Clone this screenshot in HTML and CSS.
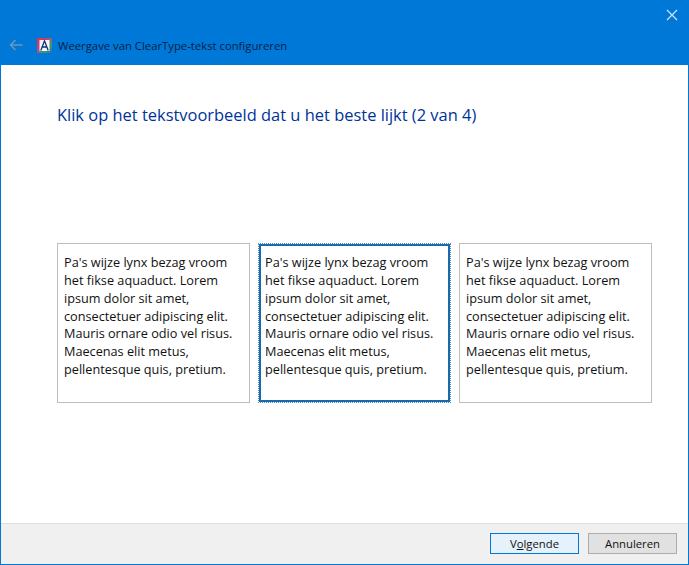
FILE: index.html
```html
<!DOCTYPE html>
<html lang="nl">
<head>
<meta charset="utf-8">
<title>Weergave van ClearType-tekst configureren</title>
<link rel="stylesheet" href="styles.css">
</head>
<body>
<div class="window">
  <header class="titlebar">
    <div class="close-row">
      <svg class="close" width="12" height="12" viewBox="0 0 12 12"><path d="M1 1L11 11M11 1L1 11" stroke="#cfe6fa" stroke-width="1.2" fill="none"/></svg>
    </div>
    <div class="nav-row">
      <svg class="back" width="14" height="12" viewBox="0 0 14 12"><path d="M13.5 6H2M6.5 1L1.5 6L6.5 11" stroke="#6a94bd" stroke-width="1.6" fill="none"/></svg>
      <svg class="app-icon" width="15" height="15" viewBox="0 0 15 15">
        <defs><linearGradient id="rb" x1="0" y1="0" x2="1" y2="1"><stop offset="0" stop-color="#e0352c"/><stop offset=".4" stop-color="#c2408c"/><stop offset=".7" stop-color="#2fa65a"/><stop offset="1" stop-color="#3a60d8"/></linearGradient></defs>
        <rect width="15" height="15" fill="url(#rb)"/>
        <rect x="2.5" y="2" width="10" height="11" fill="#f4f6ff"/>
        <path d="M3.8 12.5L7.5 2.8L11.2 12.5M5.2 9h4.6" stroke="#14306e" stroke-width="1.3" fill="none"/>
      </svg>
      <span class="title">Weergave van ClearType-tekst configureren</span>
    </div>
  </header>
  <main class="content">
    <h1 class="heading">Klik op het tekstvoorbeeld dat u het beste lijkt (2 van 4)</h1>
    <div class="samples">
      <div class="sample">Pa's wijze lynx bezag vroom het fikse aquaduct. Lorem ipsum dolor sit amet, consectetuer adipiscing elit. Mauris ornare odio vel risus. Maecenas elit metus, pellentesque quis, pretium.</div>
      <div class="sample selected">Pa's wijze lynx bezag vroom het fikse aquaduct. Lorem ipsum dolor sit amet, consectetuer adipiscing elit. Mauris ornare odio vel risus. Maecenas elit metus, pellentesque quis, pretium.</div>
      <div class="sample">Pa's wijze lynx bezag vroom het fikse aquaduct. Lorem ipsum dolor sit amet, consectetuer adipiscing elit. Mauris ornare odio vel risus. Maecenas elit metus, pellentesque quis, pretium.</div>
    </div>
  </main>
  <footer class="footer">
    <button class="btn primary">V<u>o</u>lgende</button>
    <button class="btn">Annuleren</button>
  </footer>
</div>
</body>
</html>
```
FILE: styles.css
```css
* { box-sizing: border-box; }
html, body { margin: 0; padding: 0; }
body { width: 689px; height: 565px; overflow: hidden; font-family: "Open Sans", "Noto Sans", sans-serif; }
.window { width: 689px; height: 565px; display: flex; flex-direction: column; background: #fff; border: 1px solid #0078d7; border-top: 0; }
.titlebar { height: 65px; background: #0078d7; display: flex; flex-direction: column; flex: none; }
.close-row { display: flex; justify-content: flex-end; padding: 9px 10px 0 0; height: 31px; }
.nav-row { display: flex; align-items: center; height: 28px; padding-left: 8px; }
.back { margin-right: 14px; }
.app-icon { margin-right: 6px; }
.title { font-size: 11.3px; color: #04214a; white-space: nowrap; }
.content { flex: 1; padding: 0 0 0 56px; }
.heading { margin: 39px 0 0; font-size: 16.45px; line-height: 22px; font-weight: 400; color: #003399; white-space: nowrap; }
.samples { display: flex; gap: 8px; margin-top: 117px; }
.sample { width: 193px; height: 160px; border: 1px solid #bdbdbd; padding: 10px 4px 0 6px; font-size: 12.7px; line-height: 17.85px; color: #111; background: #fff; }
.selected { border: 1px dotted #4f92cf; box-shadow: inset 0 0 0 2px #1a69ad; }
.footer { height: 41px; flex: none; background: #f0f0f0; border-top: 1px solid #dfdfdf; display: flex; justify-content: flex-end; align-items: flex-start; gap: 9px; padding: 9px 11px 0 0; }
.btn { width: 89px; height: 21px; padding: 0; font: inherit; font-size: 11.3px; color: #111; background: #e1e1e1; border: 1px solid #adadad; }
.primary { background: #e5f1fb; border-color: #0078d7; }
```
